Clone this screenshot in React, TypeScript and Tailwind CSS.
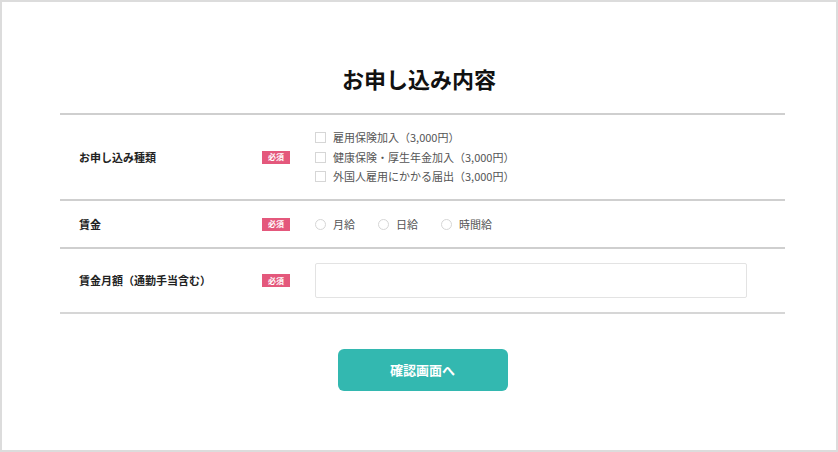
export default function App() {
  // Checkbox options for the application type
  const applyTypes = [
    "雇用保険加入（3,000円）",
    "健康保険・厚生年金加入（3,000円）",
    "外国人雇用にかかる届出（3,000円）",
  ]
  const wageTypes = ["月給", "日給", "時間給"]

  const Badge = () => (
    <div className="flex w-[53px] items-center">
      <span className="flex h-[13px] w-[28px] items-center justify-center bg-[#e4587c] text-[8px] font-bold leading-none text-white">
        必須
      </span>
    </div>
  )

  return (
    <div
      className="h-[452px] w-[838px] border-2 border-[#dcdcdc] bg-white"
      style={{ fontFamily: '"Noto Sans CJK JP", "Noto Sans", sans-serif' }}
    >
      <h1 className="pt-[61px] text-center text-[22px] font-bold leading-[30px] text-[#111]">
        お申し込み内容
      </h1>

      <div className="ml-[58px] mt-[20px] w-[725px]">
        <div className="border-t-2 border-[#cfcfcf]">
          {/* 申し込み種類 */}
          <div className="flex h-[86px] items-center border-b-2 border-[#cfcfcf]">
            <div className="w-[202px] pl-[19px] text-[11px] font-bold text-[#222]">お申し込み種類</div>
            <Badge />
            <div className="flex flex-col">
              {applyTypes.map((label, i) => (
                <label key={i} className="flex h-[19.5px] items-center gap-[7px] text-[11px] text-[#555]">
                  <span className="h-[11px] w-[11px] border border-[#d6d6d6] bg-white" />
                  {label}
                </label>
              ))}
            </div>
          </div>

          {/* 賃金 */}
          <div className="flex h-[48px] items-center border-b-2 border-[#cfcfcf]">
            <div className="w-[202px] pl-[19px] text-[11px] font-bold text-[#222]">賃金</div>
            <Badge />
            <div className="flex items-center gap-[23px]">
              {wageTypes.map((label, i) => (
                <label key={i} className="flex items-center gap-[7px] text-[11px] text-[#555]">
                  <span className="h-[11px] w-[11px] rounded-full border border-[#d6d6d6] bg-white" />
                  {label}
                </label>
              ))}
            </div>
          </div>

          {/* 賃金月額 */}
          <div className="flex h-[65px] items-center border-b-2 border-[#d6d6d6]">
            <div className="w-[202px] pl-[19px] text-[11px] font-bold text-[#222]">賃金月額（通勤手当含む）</div>
            <Badge />
            <input
              type="text"
              className="h-[35px] w-[432px] rounded-[2px] border border-[#e3e3e3] bg-white px-2 text-[12px] outline-none"
            />
          </div>
        </div>

        <div className="mt-[35px] flex justify-center">
          <button className="h-[42px] w-[170px] rounded-[6px] bg-[#33b8b0] text-[13px] font-bold text-white">
            確認画面へ
          </button>
        </div>
      </div>
    </div>
  )
}
